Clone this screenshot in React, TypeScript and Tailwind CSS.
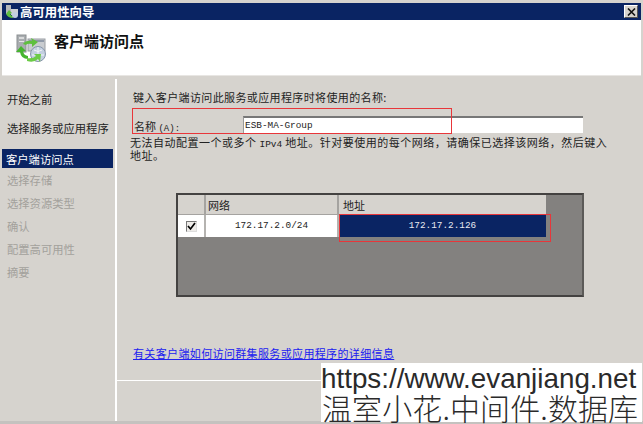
const cjk = "font-['Noto_Sans_CJK_SC',sans-serif]";
const mono = "font-['Liberation_Mono','Noto_Sans_CJK_SC',monospace]";
const comma = "\uFF0C";

const steps = [
  { label: "开始之前", cls: "h-[29px] text-[#222]" },
  { label: "选择服务或应用程序", cls: "h-[27px] text-[#222]" },
];
const pending = ["选择存储", "选择资源类型", "确认", "配置高可用性", "摘要"];

function WizardIcon() {
  return (
    <svg width="32" height="30" viewBox="0 0 32 30" className="shrink-0">
      <rect x="2" y="1" width="9" height="17" fill="#a9adb0" stroke="#8b8f92" />
      <rect x="4" y="3" width="5" height="2" fill="#d9dadb" />
      <rect x="4" y="7" width="5" height="1" fill="#e6e6e6" />
      <rect x="13" y="5" width="17" height="12" fill="#c9ccd0" stroke="#9a9ea3" />
      <rect x="14" y="6" width="15" height="2" fill="#8f99a8" />
      <circle cx="23" cy="20" r="7.5" fill="#c3cfe0" stroke="#8896aa" />
      <path d="M19 16q4 3 8 0M17 21h12M23 13v14" stroke="#f2f5f9" fill="none" />
      <path d="M8 10q3-4 9-3l-1-3 7 4-6 5v-3q-5-1-6 1z" fill="#5fbf3f" />
      <path d="M1 18l5-6 5 5-3 .5q1 4 5 4.5v3q-7 0-8-7z" fill="#46b52f" />
      <path d="M12 24q6 1 9-2l-2-2h7l-1 8-2-3q-4 4-11 2z" fill="#6ccb47" />
    </svg>
  );
}

export default function App() {
  return (
    <div className={`relative w-[643px] h-[424px] overflow-hidden bg-[#d6d3ce] ${cjk} text-[11px] leading-[12px] text-[#222]`}>
      <div className="flex flex-col h-[421px] pt-[3px] pl-[2px] pr-[2px]">
        {/* title bar */}
        <div className="h-[17px] shrink-0 bg-[#0a2463] flex items-center pl-[3px] pr-[3px]">
          <svg width="14" height="14" viewBox="0 0 14 14" className="shrink-0">
            <rect x="1" y="0" width="5" height="9" fill="#b5b8bb" />
            <rect x="6" y="4" width="7" height="6" fill="#cdd0d4" />
            <path d="M1 9l3-4 3 3-2 1q1 2 3 2v2q-5 0-7-4z" fill="#5fbf3f" />
            <circle cx="10" cy="10" r="3" fill="#c3cfe0" />
          </svg>
          <span className="ml-[1px] text-[12.4px] font-bold text-white">高可用性向导</span>
          <div className="ml-auto w-[14px] h-[13px] bg-[#d6d3ce] border border-t-white border-l-white border-r-[#555] border-b-[#555] flex items-center justify-center">
            <svg width="9" height="8" viewBox="0 0 9 8">
              <path d="M1 0.5l7 7M8 0.5l-7 7" stroke="#111" strokeWidth="1.6" />
            </svg>
          </div>
        </div>

        {/* header */}
        <div className="h-[56px] shrink-0 bg-white flex items-start pl-[13px] pt-[14px] border-b border-[#e8e6e3]">
          <WizardIcon />
          <span className="ml-[7px] mt-[-3px] text-[15px] leading-[20px] font-bold text-[#111]">客户端访问点</span>
        </div>

        <div className="flex flex-1 min-h-0 mt-[3px]">
          {/* sidebar */}
          <div className="w-[115px] shrink-0 border-r-2 border-white pt-[14px] pr-[2px]">
            {steps.map((s) => (
              <div key={s.label} className={`${s.cls} pl-[5px] flex items-start text-[11.3px]`}>
                {s.label}
              </div>
            ))}
            <div className="h-[19px] mb-[1px] bg-[#0a2463] text-white pl-[4px] flex items-center text-[11.3px]">
              客户端访问点
            </div>
            {pending.map((p) => (
              <div key={p} className="h-[22.8px] pl-[5px] flex items-center text-[11.3px] text-[#a3a19c]">
                {p}
              </div>
            ))}
          </div>

          {/* main */}
          <div className="flex-1 flex flex-col min-w-0">
            <div className="h-[301px] shrink-0 pl-[16px] pt-[11px]">
              <div className="text-[11px] leading-[14px] tracking-[0.38px] whitespace-nowrap">键入客户端访问此服务或应用程序时将使用的名称:</div>
              <div className="flex items-end mt-[9px] h-[20px]">
                <span className={`w-[109px] shrink-0 ml-[1px] mb-[-2px] text-[11px] ${cjk}`}>
                  名称 <span className={`${mono} text-[9px]`}>(A):</span>
                </span>
                <div className={`w-[340px] h-[17px] bg-white border-t-2 border-t-[#777] border-l border-l-[#999] pl-[1px] flex items-center ${mono} text-[9.4px]`}>
                  ESB-MA-Group
                </div>
              </div>
              <div className="ml-[-3px] mt-[4px] text-[11px] leading-[11px] tracking-[0.5px] whitespace-nowrap">
                无法自动配置一个或多个 <span className={`${mono} text-[9.5px] tracking-normal`}>IPv4</span> 地址。针对要使用的每个网络{comma}请确保已选择该网络{comma}然后键入
                <br />
                地址。
              </div>

              {/* network grid */}
              <div className="mt-[32px] ml-[43px] w-[408px] h-[104px] bg-[#83817f] border-2 border-[#444241] border-r-[#5c5a58] flex flex-col">
                <div className="flex h-[20px] shrink-0 bg-[#d6d3ce] mr-[36px] border-b border-[#a5a3a0]">
                  <div className="w-[28px] border-r-2 border-[#a5a3a0]" />
                  <div className="w-[133px] border-r-2 border-[#a5a3a0] pl-[2px] flex items-center">网络</div>
                  <div className="flex-1 pl-[4px] flex items-center">地址</div>
                </div>
                <div className="flex h-[22px] shrink-0 mr-[36px]">
                  <div className="w-[28px] bg-white border-r-2 border-[#b5b3b0] flex items-center justify-center">
                    <div className="w-[11px] h-[11px] bg-[#eeece9] border border-t-[#777] border-l-[#777] border-r-[#ddd] border-b-[#ddd] flex items-center justify-center">
                      <svg width="9" height="9" viewBox="0 0 9 9">
                        <path d="M1 4l2.5 3L8 1" stroke="#000" strokeWidth="1.7" fill="none" />
                      </svg>
                    </div>
                  </div>
                  <div className={`w-[133px] bg-white border-r-2 border-[#b5b3b0] flex items-center justify-center ${mono} text-[9.4px]`}>
                    172.17.2.0/24
                  </div>
                  <div className={`flex-1 bg-[#0a2463] text-[#e8e8f0] flex items-center justify-center ${mono} text-[9.4px]`}>
                    172.17.2.126
                  </div>
                </div>
              </div>

              <div className="mt-[49px] text-[11px] leading-[14px] tracking-[0.36px] whitespace-nowrap text-[#2020f0] underline">
                有关客户端如何访问群集服务或应用程序的详细信息
              </div>
            </div>
            <div className="h-px bg-white" />
          </div>
        </div>
      </div>
      <div className="h-[3px] bg-[#c4c2bf]" />

      {/* red annotation boxes */}
      <div className="absolute left-[132px] top-[108px] w-[320px] h-[26px] border border-[#e8363a]" />
      <div className="absolute left-[339px] top-[214px] w-[212px] h-[28px] border border-[#e8363a]" />

      {/* watermark */}
      <div className="absolute left-[321px] top-[363px] w-[321px] h-[59px] pt-[1px] bg-white text-[#2a2a2a]">
        <div className="font-['Liberation_Sans',sans-serif] text-[27.8px] leading-[29px] whitespace-nowrap">https://www.evanjiang.net</div>
        <div className="text-[30px] leading-[29px] tracking-[0.1px] pl-[1px] whitespace-nowrap font-light">温室小花.中间件.数据库</div>
      </div>
    </div>
  );
}
